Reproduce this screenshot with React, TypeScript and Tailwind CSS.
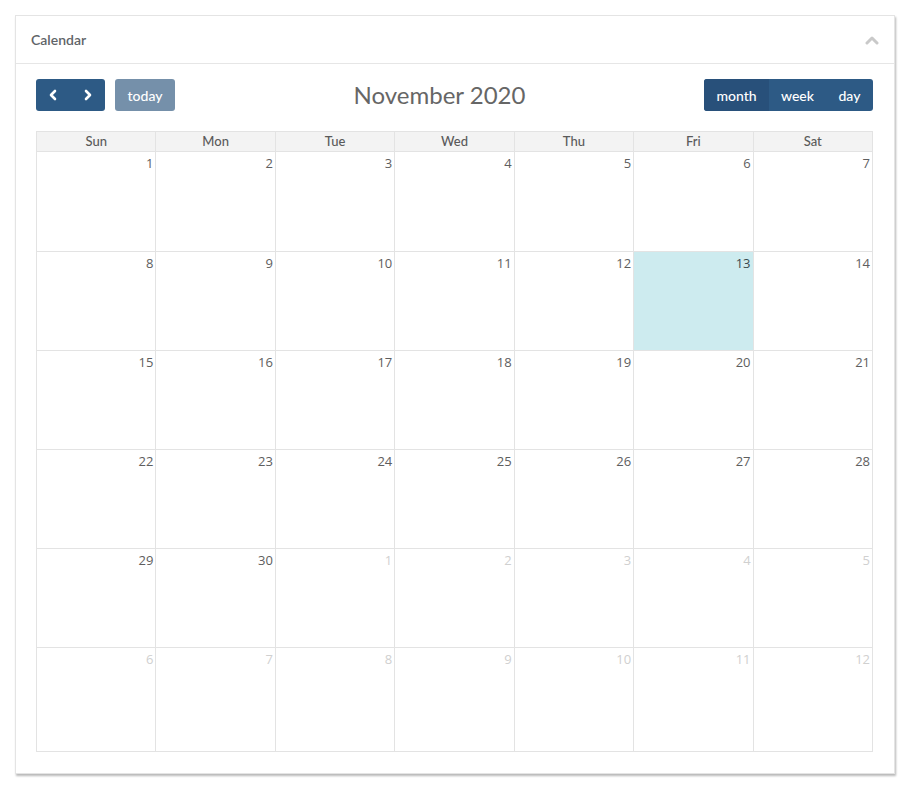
import React from "react";

type Day = { n: number; other: boolean; today?: boolean };

const weeks: Day[][] = (() => {
  const out: Day[][] = [];
  let cur = 1;
  let other = false;
  for (let w = 0; w < 6; w++) {
    const row: Day[] = [];
    for (let d = 0; d < 7; d++) {
      row.push({ n: cur, other, today: !other && cur === 13 });
      cur++;
      if (!other && cur > 30) {
        cur = 1;
        other = true;
      }
    }
    out.push(row);
  }
  return out;
})();

const rowHeights = ["h-[100px]", "h-[99px]", "h-[99px]", "h-[99px]", "h-[99px]", "h-[104px]"];

const Chevron = ({ dir }: { dir: "left" | "right" | "up" }) => {
  if (dir === "up")
    return (
      <svg width="14" height="10" viewBox="0 0 14 10">
        <polyline points="2,8 7,3 12,8" fill="none" stroke="#c9c9c9" strokeWidth="3" strokeLinecap="round" strokeLinejoin="round" />
      </svg>
    );
  return (
    <svg width="10" height="12" viewBox="0 0 10 12">
      {dir === "left" ? (
        <polyline points="7,2 3,6 7,10" fill="none" stroke="white" strokeWidth="2.6" strokeLinecap="round" strokeLinejoin="round" />
      ) : (
        <polyline points="3,2 7,6 3,10" fill="none" stroke="white" strokeWidth="2.6" strokeLinecap="round" strokeLinejoin="round" />
      )}
    </svg>
  );
};

export default function App() {
  const days = ["Sun", "Mon", "Tue", "Wed", "Thu", "Fri", "Sat"];
  return (
    <div className="min-h-[785px] w-[908px] bg-white pl-[15px] pt-[15px]" style={{ fontFamily: "Lato, 'Open Sans', sans-serif" }}>
      <div className="w-[880px] border border-[#e4e4e4] bg-white shadow-[1px_2px_2px_rgba(0,0,0,0.28)]">
        <div className="flex h-[48px] items-center justify-between border-b border-[#e6e6e6] pl-[15px] pr-[15px]">
          <span className="text-[14px] font-semibold text-[#5f6468]">Calendar</span>
          <Chevron dir="up" />
        </div>
        <div className="pb-[21px] pl-[20px] pr-[21px] pt-[15px]">
          <div className="flex h-[32px] items-center justify-between">
            <div className="flex items-center gap-[10px]">
              <div className="flex h-[32px] w-[69px] overflow-hidden rounded-[3px] bg-[#2d5a85]">
                <button className="flex flex-1 items-center justify-center"><Chevron dir="left" /></button>
                <button className="flex flex-1 items-center justify-center"><Chevron dir="right" /></button>
              </div>
              <button className="h-[32px] w-[60px] rounded-[3px] bg-[#7590aa] text-[14px] font-medium text-white">today</button>
            </div>
            <div className="text-[24px] text-[#666666]">November 2020</div>
            <div className="flex h-[32px] overflow-hidden rounded-[3px] bg-[#2d5a85] text-[14px] font-medium text-white">
              <button className="w-[65px] bg-[#28507a]">month</button>
              <button className="w-[57px]">week</button>
              <button className="w-[47px]">day</button>
            </div>
          </div>
          <div className="mt-[20px] border-l border-t border-[#e3e3e3]">
            <div className="grid grid-cols-7 bg-[#f3f3f3]">
              {days.map((d) => (
                <div key={d} className="flex h-[20px] items-center justify-center border-b border-r border-[#e3e3e3] text-[13px] font-medium text-[#5a5a5a]">
                  {d}
                </div>
              ))}
            </div>
            {weeks.map((w, i) => (
              <div key={i} className="grid grid-cols-7">
                {w.map((d, j) => (
                  <div
                    key={j}
                    className={`${rowHeights[i]} border-b border-r border-[#e3e3e3] pr-[2px] pt-[2px] text-right text-[13px] leading-[18px] ${d.today ? "bg-[#cdebef] text-[#3b4a4e]" : d.other ? "text-[#d0d0d0]" : "text-[#5e5e5e]"}`}
                    style={{ fontFamily: "'Open Sans', 'Noto Sans', sans-serif" }}
                  >
                    {d.n}
                  </div>
                ))}
              </div>
            ))}
          </div>
        </div>
      </div>
    </div>
  );
}
